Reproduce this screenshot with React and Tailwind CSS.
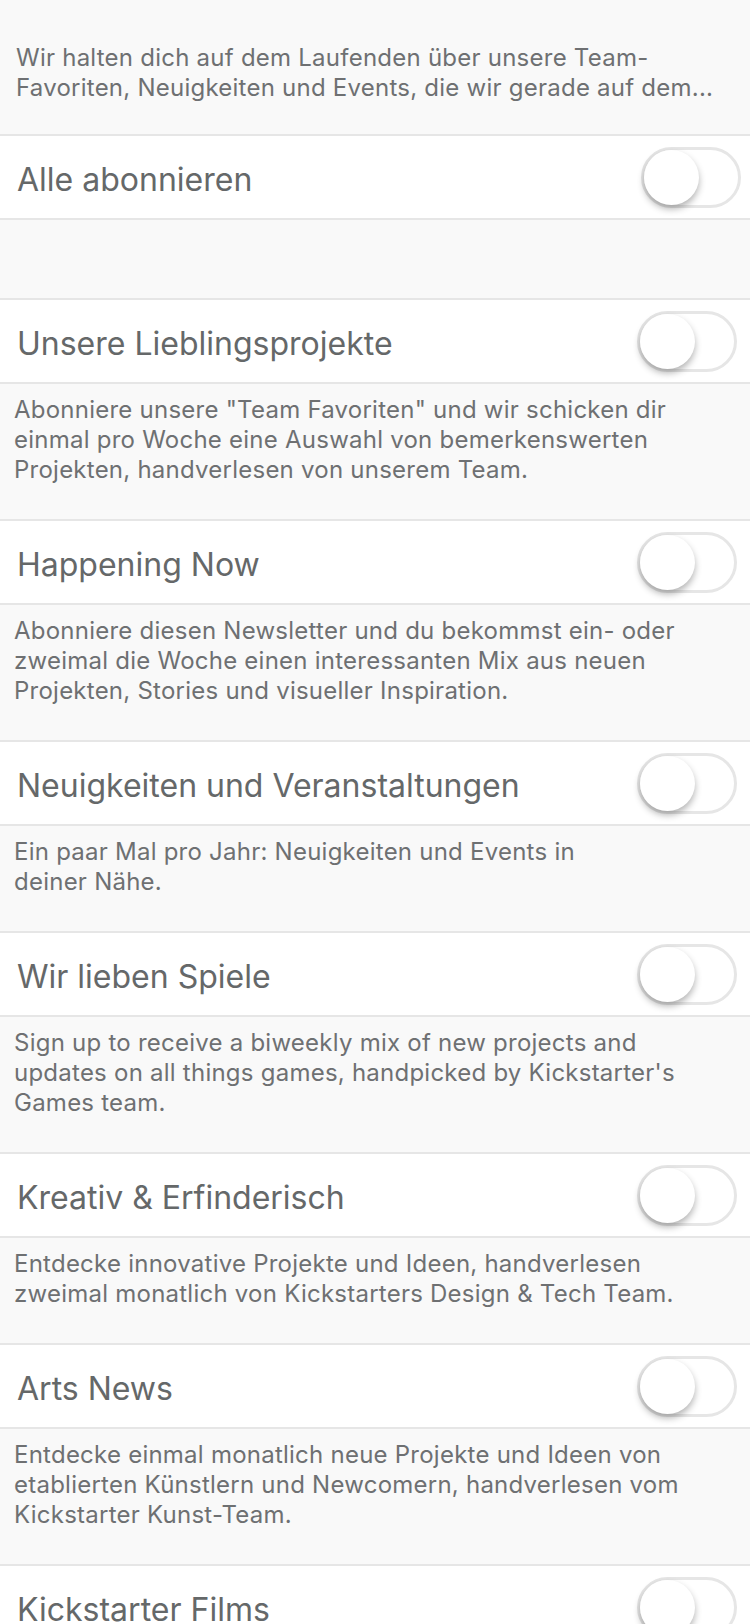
import React, { useState } from "react";

const newsletters = [
  {
    id: "favorites",
    title: "Unsere Lieblingsprojekte",
    lines: [
      'Abonniere unsere "Team Favoriten" und wir schicken dir',
      "einmal pro Woche eine Auswahl von bemerkenswerten",
      "Projekten, handverlesen von unserem Team.",
    ],
  },
  {
    id: "happening",
    title: "Happening Now",
    lines: [
      "Abonniere diesen Newsletter und du bekommst ein- oder",
      "zweimal die Woche einen interessanten Mix aus neuen",
      "Projekten, Stories und visueller Inspiration.",
    ],
  },
  {
    id: "news",
    title: "Neuigkeiten und Veranstaltungen",
    lines: ["Ein paar Mal pro Jahr: Neuigkeiten und Events in", "deiner Nähe."],
  },
  {
    id: "games",
    title: "Wir lieben Spiele",
    lines: [
      "Sign up to receive a biweekly mix of new projects and",
      "updates on all things games, handpicked by Kickstarter's",
      "Games team.",
    ],
  },
  {
    id: "design",
    title: "Kreativ & Erfinderisch",
    lines: [
      "Entdecke innovative Projekte und Ideen, handverlesen",
      "zweimal monatlich von Kickstarters Design & Tech Team.",
    ],
  },
  {
    id: "arts",
    title: "Arts News",
    lines: [
      "Entdecke einmal monatlich neue Projekte und Ideen von",
      "etablierten Künstlern und Newcomern, handverlesen vom",
      "Kickstarter Kunst-Team.",
    ],
  },
  {
    id: "films",
    title: "Kickstarter Films",
    lines: [],
  },
];

const Toggle = ({ on, onChange }) => (
  <button
    onClick={onChange}
    className={`relative w-[100px] h-[61px] rounded-full border-[3px] ${
      on ? "bg-[#2bde73] border-[#2bde73]" : "bg-white border-[#e6e6e6]"
    }`}
  >
    <span
      className={`absolute top-[0px] w-[55px] h-[55px] rounded-full bg-white shadow-[0_4px_7px_rgba(0,0,0,0.3)] ${
        on ? "left-[39px]" : "left-[0px]"
      }`}
    />
  </button>
);

const Row = ({ title, on, onChange, right = "pr-[13px]" }) => (
  <div
    className={`h-[86px] flex items-center justify-between bg-white border-y-2 border-[#e6e6e6] pl-[17px] ${right}`}
  >
    <span className="mt-[5px] text-[32px] text-[#656869]">{title}</span>
    <Toggle on={on} onChange={onChange} />
  </div>
);

const App = () => {
  const [all, setAll] = useState(false);
  const [subs, setSubs] = useState({});

  const flip = (id) => setSubs((s) => ({ ...s, [id]: !s[id] }));

  return (
    <div className="min-h-screen bg-[#f9f9f9] font-['Inter',sans-serif] overflow-hidden">
      {/* Intro */}
      <div className="h-[134px] px-[16px] pt-[43px] text-[24px] leading-[30px] tracking-[0.01em] text-[#6e7072]">
        <p>Wir halten dich auf dem Laufenden über unsere Team-</p>
        <p>Favoriten, Neuigkeiten und Events, die wir gerade auf dem...</p>
      </div>

      <Row
        title="Alle abonnieren"
        on={all}
        onChange={() => setAll(!all)}
        right="pr-[9px]"
      />

      <div className="h-[78px]" />

      {newsletters.map((n) => (
        <div key={n.id}>
          <Row title={n.title} on={!!subs[n.id]} onChange={() => flip(n.id)} />
          {n.lines.length > 0 && (
            <div className="px-[14px] pt-[11px] pb-[34px] text-[24px] leading-[30px] tracking-[0.01em] text-[#6e7072]">
              {n.lines.map((line, i) => (
                <p key={i}>{line}</p>
              ))}
            </div>
          )}
        </div>
      ))}
    </div>
  );
};

export default App;
